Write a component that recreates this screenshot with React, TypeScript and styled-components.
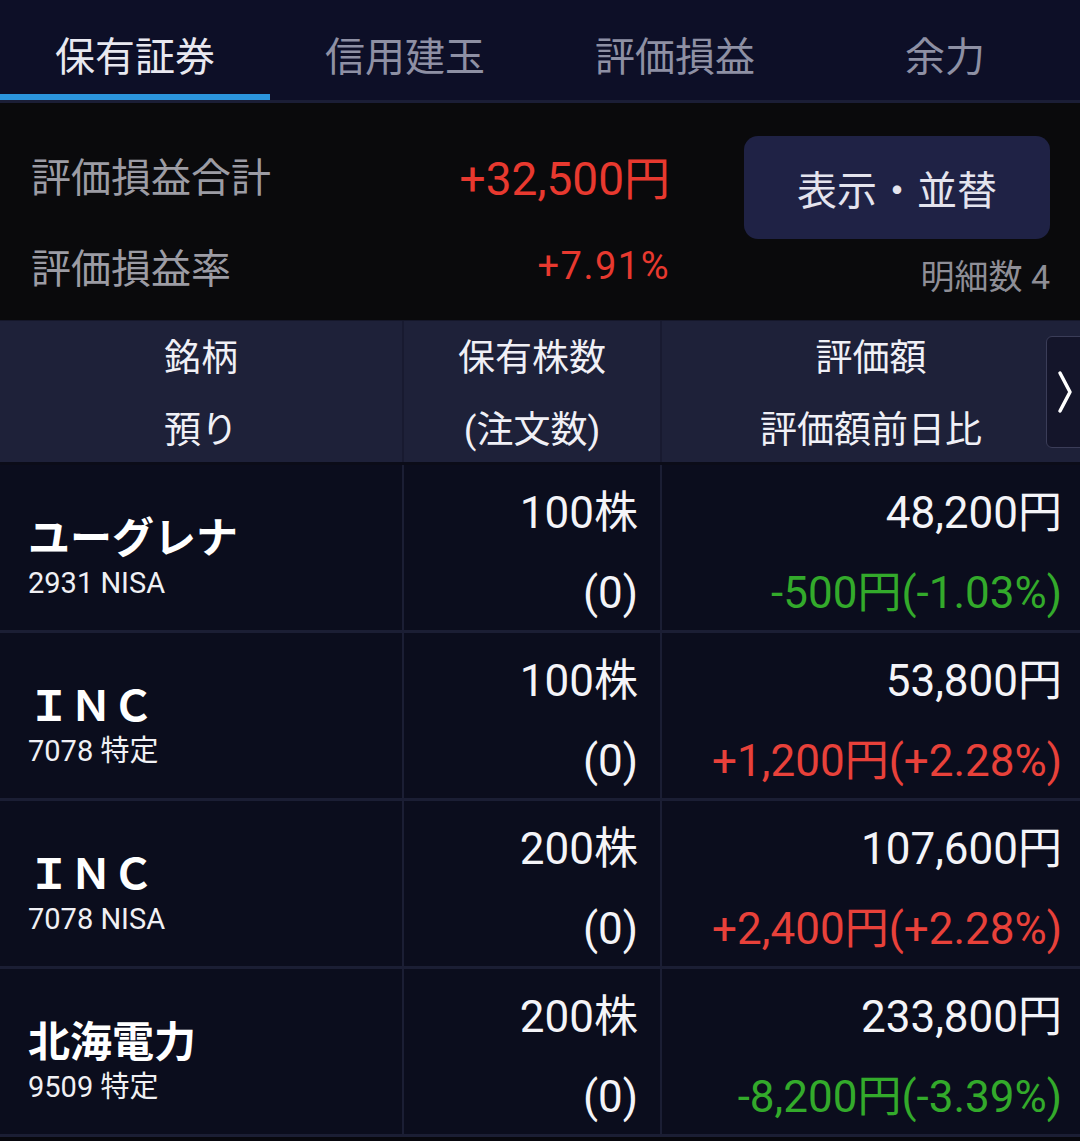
import React from 'react';
import styled, { createGlobalStyle } from 'styled-components';

const GlobalStyle = createGlobalStyle`
  html, body {
    margin: 0;
    padding: 0;
    background: #0a0a0c;
  }
  body {
    font-family: Roboto, "Noto Sans CJK JP", sans-serif;
    -webkit-font-smoothing: antialiased;
  }
`;

const Page = styled.div`
  width: 1080px;
  height: 1141px;
  overflow: hidden;
  background: #08080e;
  color: #f2f2f6;
`;

const TabBar = styled.div`
  display: flex;
  height: 100px;
  background: #0d0f27;
  border-bottom: 3px solid #1b1e36;
`;

const Tab = styled.div<{ $active?: boolean }>`
  flex: 1;
  display: flex;
  align-items: center;
  justify-content: center;
  padding-top: 14px;
  box-sizing: border-box;
  font-size: 40px;
  color: ${(p) => (p.$active ? '#e8e8f0' : '#8e90a4')};
  border-bottom: 6px solid ${(p) => (p.$active ? '#2b95dd' : 'transparent')};
`;

const Summary = styled.div`
  display: grid;
  grid-template-columns: 1fr 306px;
  column-gap: 74px;
  padding: 33px 30px 10px 31px;
  background: #0a0a0c;
`;

const SummaryRows = styled.div`
  display: flex;
  flex-direction: column;
  gap: 3px;
  margin-top: -5px;
`;

const SummaryRow = styled.div`
  display: flex;
  align-items: center;
  justify-content: space-between;
  height: 88px;
`;

const SummaryLabel = styled.span`
  font-size: 40px;
  color: #9c9ca4;
`;

const SummaryValue = styled.span<{ $size: number; $spacing?: number }>`
  font-size: ${(p) => p.$size}px;
  letter-spacing: ${(p) => p.$spacing ?? 0}px;
  color: #e8392f;
`;

const SideColumn = styled.div`
  display: flex;
  flex-direction: column;
  align-items: stretch;
`;

const SortButton = styled.button`
  height: 103px;
  border: none;
  border-radius: 14px;
  background: #1f2245;
  color: #e4e4ee;
  font-family: inherit;
  font-size: 40px;
`;

const DetailCount = styled.div`
  margin-top: 18px;
  text-align: right;
  font-size: 34px;
  line-height: 40px;
  color: #8e8e96;
`;

const Table = styled.div`
  position: relative;
  border-top: 1px solid #15172a;
`;

const Grid = styled.div`
  display: grid;
  grid-template-columns: 402px 256px 1fr;
  column-gap: 2px;
`;

const HeaderRow = styled(Grid)`
  height: 141px;
  background: #181a30;
  border-bottom: 3px solid #0b0c18;
`;

const HeaderCell = styled.div`
  display: flex;
  flex-direction: column;
  align-items: center;
  justify-content: center;
  gap: 34px;
  padding-top: 6px;
  background: #1e2139;
  font-size: 37px;
  line-height: 38px;
  color: #f0f0f6;
`;

const ScrollButton = styled.div`
  position: absolute;
  top: 15px;
  left: 1046px;
  width: 50px;
  height: 112px;
  display: flex;
  align-items: center;
  padding-left: 10px;
  box-sizing: border-box;
  background: #14152a;
  border: 1px solid #3b3d58;
  border-radius: 6px;
`;

const Row = styled(Grid)`
  height: 165px;
  background: #1b1e34;
  border-bottom: 3px solid #1b1e34;
`;

const Cell = styled.div`
  background: #0b0d1d;
`;

const NameCell = styled(Cell)`
  display: flex;
  flex-direction: column;
  justify-content: center;
  padding: 18px 0 0 28px;
`;

const StockName = styled.div`
  font-size: 42px;
  font-weight: 700;
  line-height: 52px;
  color: #ffffff;
`;

const StockCode = styled.div`
  font-size: 29px;
  line-height: 36px;
  color: #f0f0f4;
`;

const NumberCell = styled(Cell)<{ $pad: number }>`
  display: flex;
  flex-direction: column;
  align-items: flex-end;
  justify-content: center;
  gap: 32px;
  padding-right: ${(p) => p.$pad}px;
  padding-top: 10px;
`;

const Num = styled.div<{ $tone?: 'up' | 'down' }>`
  font-size: 44px;
  line-height: 48px;
  color: ${(p) => (p.$tone === 'up' ? '#e8413a' : p.$tone === 'down' ? '#33aa2b' : '#f4f4f8')};
`;

const tabs = ['保有証券', '信用建玉', '評価損益', '余力'];

const holdings = [
  { name: 'ユーグレナ', code: '2931 NISA', qty: '100株', value: '48,200円', change: '-500円(-1.03%)', tone: 'down' as const },
  { name: 'ＩＮＣ', code: '7078 特定', qty: '100株', value: '53,800円', change: '+1,200円(+2.28%)', tone: 'up' as const },
  { name: 'ＩＮＣ', code: '7078 NISA', qty: '200株', value: '107,600円', change: '+2,400円(+2.28%)', tone: 'up' as const },
  { name: '北海電力', code: '9509 特定', qty: '200株', value: '233,800円', change: '-8,200円(-3.39%)', tone: 'down' as const },
];

const App = () => {
  return (
    <Page>
      <GlobalStyle />
      <TabBar>
        {tabs.map((t, i) => (
          <Tab key={t} $active={i === 0}>
            {t}
          </Tab>
        ))}
      </TabBar>
      <Summary>
        <SummaryRows>
          <SummaryRow>
            <SummaryLabel>評価損益合計</SummaryLabel>
            <SummaryValue $size={46}>+32,500円</SummaryValue>
          </SummaryRow>
          <SummaryRow>
            <SummaryLabel>評価損益率</SummaryLabel>
            <SummaryValue $size={38} $spacing={1.5}>+7.91%</SummaryValue>
          </SummaryRow>
        </SummaryRows>
        <SideColumn>
          <SortButton>表示・並替</SortButton>
          <DetailCount>明細数 4</DetailCount>
        </SideColumn>
      </Summary>
      <Table>
        <HeaderRow>
          <HeaderCell>
            <span>銘柄</span>
            <span>預り</span>
          </HeaderCell>
          <HeaderCell>
            <span>保有株数</span>
            <span>(注文数)</span>
          </HeaderCell>
          <HeaderCell>
            <span>評価額</span>
            <span>評価額前日比</span>
          </HeaderCell>
        </HeaderRow>
        <ScrollButton>
          <svg width="16" height="44" viewBox="0 0 16 44">
            <polyline points="3,3 13,22 3,41" fill="none" stroke="#ffffff" strokeWidth="3.5" strokeLinecap="round" strokeLinejoin="round" />
          </svg>
        </ScrollButton>
        {holdings.map((h, i) => (
          <Row key={i}>
            <NameCell>
              <StockName>{h.name}</StockName>
              <StockCode>{h.code}</StockCode>
            </NameCell>
            <NumberCell $pad={22}>
              <Num>{h.qty}</Num>
              <Num>(0)</Num>
            </NumberCell>
            <NumberCell $pad={18}>
              <Num>{h.value}</Num>
              <Num $tone={h.tone}>{h.change}</Num>
            </NumberCell>
          </Row>
        ))}
      </Table>
    </Page>
  );
};

export default App;
